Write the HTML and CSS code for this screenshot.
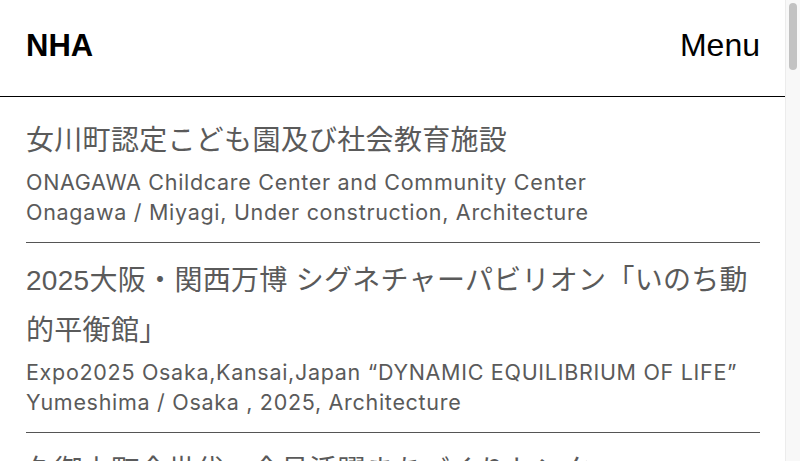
FILE: index.html
```html
<!DOCTYPE html>
<html lang="ja">
<head>
<meta charset="utf-8">
<title>NHA</title>
<link rel="stylesheet" href="styles.css">
</head>
<body>
<div class="page">
  <header class="site-header">
    <a class="logo" href="#">NHA</a>
    <button class="menu-btn" type="button">Menu</button>
  </header>
  <main class="works">
    <article class="work">
      <h2 class="work-title">女川町認定こども園及び社会教育施設</h2>
      <p class="work-meta">ONAGAWA Childcare Center and Community Center</p>
      <p class="work-meta">Onagawa / Miyagi, Under construction, Architecture</p>
    </article>
    <article class="work">
      <h2 class="work-title">2025大阪・関西万博 シグネチャーパビリオン「いのち動的平衡館」</h2>
      <p class="work-meta">Expo2025 Osaka,Kansai,Japan “DYNAMIC EQUILIBRIUM OF LIFE”</p>
      <p class="work-meta">Yumeshima / Osaka , 2025, Architecture</p>
    </article>
    <article class="work">
      <h2 class="work-title">久御山町全世代・全員活躍まちづくりセンター</h2>
      <p class="work-meta">Kumiyama Town Community Center</p>
      <p class="work-meta">Kumiyama / Kyoto, 2023, Architecture</p>
    </article>
    <article class="work">
      <h2 class="work-title">女川町庁舎</h2>
      <p class="work-meta">Onagawa Town Hall</p>
      <p class="work-meta">Onagawa / Miyagi, 2018, Architecture</p>
    </article>
  </main>
</div>
<div class="scrollbar" aria-hidden="true"><div class="scrollbar-thumb"></div></div>
</body>
</html>
```

FILE: styles.css
```css
html, body {
  margin: 0;
  padding: 0;
  background: #ffffff;
}

body {
  font-family: Inter, "Liberation Sans", "Noto Sans CJK JP", sans-serif;
  color: #5a5a5a;
}

.page {
  margin-right: 15px;
}

.site-header {
  height: 97px;
  box-sizing: border-box;
  border-bottom: 1px solid #000000;
  display: flex;
  align-items: center;
  justify-content: space-between;
  padding: 0 25px 5px 26px;
}

.logo {
  font-family: "Liberation Sans", Arial, sans-serif;
  font-weight: 700;
  font-size: 31px;
  color: #000000;
  text-decoration: none;
}

.menu-btn {
  font-family: "Liberation Sans", Arial, sans-serif;
  font-size: 32px;
  color: #000000;
  background: none;
  border: none;
  padding: 0;
  cursor: pointer;
}

.works {
  padding: 6px 25px 0 26px;
}

.work {
  padding: 13px 0 15px;
  border-bottom: 1px solid #555555;
}

.work-title {
  margin: 0 0 1px;
  font-family: "Liberation Sans", "Noto Sans CJK JP", sans-serif;
  font-weight: 400;
  font-size: 28px;
  line-height: 50px;
  letter-spacing: 0.3px;
  color: #5a5a5a;
}

.work-meta {
  margin: 0;
  font-size: 21.5px;
  line-height: 30px;
  letter-spacing: 0.7px;
  color: #5a5a5a;
}

.scrollbar {
  position: fixed;
  top: 0;
  right: 0;
  bottom: 0;
  width: 14px;
  background: #f8f8f8;
  border-left: 1px solid #ececec;
}

.scrollbar-thumb {
  margin: 3px 0 0 3px;
  width: 8px;
  height: 67px;
  border-radius: 4px;
  background: #c2c2c2;
}
```
